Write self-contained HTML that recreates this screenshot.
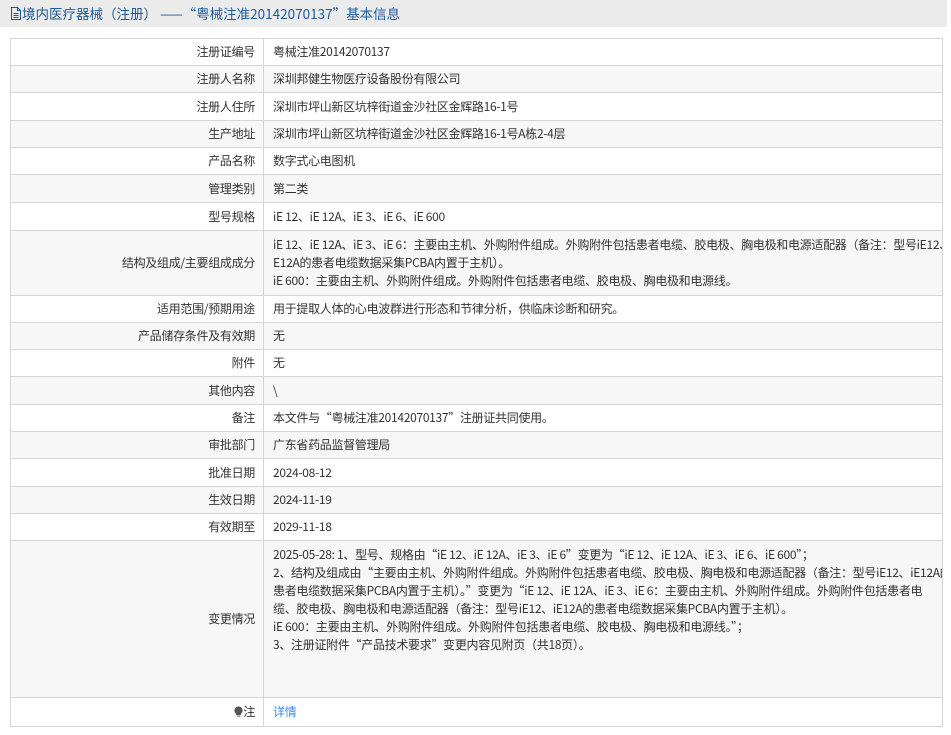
<!DOCTYPE html>
<html><head><meta charset="utf-8"><style>
html,body{margin:0;padding:0;background:#fff;}
body{width:951px;height:735px;overflow:hidden;font-family:"Noto Sans CJK SC","Liberation Sans",sans-serif;font-size:12px;color:#333;position:relative;}
.hd{position:absolute;left:0;top:0;width:947px;height:27px;background:#ebebeb;color:#1f5a9a;font-size:13.5px;line-height:27px;}
.hd span{position:absolute;left:10px;top:0;white-space:nowrap;}
table{position:absolute;left:10px;top:38px;width:933px;border-collapse:collapse;table-layout:fixed;}
td{border:1px solid #d6d6d6;padding:0;vertical-align:middle;overflow:hidden;line-height:18px;letter-spacing:-0.3px;}
td.l{width:244px;text-align:right;padding-right:8px;}
td.v{padding-left:9px;white-space:nowrap;}
tr:nth-child(even) td{background:#f7f7f7;}
a{color:#3a8ee6;text-decoration:none;}
</style></head><body>
<div class="hd"><span><svg width="12" height="13" viewBox="0 0 12 13" style="vertical-align:-1px"><path d="M1.5 .5h6l3 3v9h-9z M7.5 .5v3h3 M3.5 6.5h5 M3.5 8.5h5 M3.5 10.5h5" fill="none" stroke="#1f5a9a"/></svg>境内医疗器械（注册） ——“粤械注准20142070137”基本信息</span></div>
<table>
<tr style="height:27px"><td class="l">注册证编号</td><td class="v">粤械注准20142070137</td></tr>
<tr style="height:27px"><td class="l">注册人名称</td><td class="v">深圳邦健生物医疗设备股份有限公司</td></tr>
<tr style="height:28px"><td class="l">注册人住所</td><td class="v">深圳市坪山新区坑梓街道金沙社区金辉路16-1号</td></tr>
<tr style="height:27px"><td class="l">生产地址</td><td class="v">深圳市坪山新区坑梓街道金沙社区金辉路16-1号A栋2-4层</td></tr>
<tr style="height:27px"><td class="l">产品名称</td><td class="v">数字式心电图机</td></tr>
<tr style="height:28px"><td class="l">管理类别</td><td class="v">第二类</td></tr>
<tr style="height:28px"><td class="l">型号规格</td><td class="v">iE 12、iE 12A、iE 3、iE 6、iE 600</td></tr>
<tr style="height:65px"><td class="l">结构及组成/主要组成成分</td><td class="v">iE 12、iE 12A、iE 3、iE 6：主要由主机、外购附件组成。外购附件包括患者电缆、胶电极、胸电极和电源适配器（备注：型号iE12、i<br>E12A的患者电缆数据采集PCBA内置于主机）。<br>iE 600：主要由主机、外购附件组成。外购附件包括患者电缆、胶电极、胸电极和电源线。</td></tr>
<tr style="height:27px"><td class="l">适用范围/预期用途</td><td class="v">用于提取人体的心电波群进行形态和节律分析，供临床诊断和研究。</td></tr>
<tr style="height:27px"><td class="l">产品储存条件及有效期</td><td class="v">无</td></tr>
<tr style="height:27px"><td class="l">附件</td><td class="v">无</td></tr>
<tr style="height:28px"><td class="l">其他内容</td><td class="v">\</td></tr>
<tr style="height:27px"><td class="l">备注</td><td class="v">本文件与“粤械注准20142070137”注册证共同使用。</td></tr>
<tr style="height:27px"><td class="l">审批部门</td><td class="v">广东省药品监督管理局</td></tr>
<tr style="height:28px"><td class="l">批准日期</td><td class="v">2024-08-12</td></tr>
<tr style="height:27px"><td class="l">生效日期</td><td class="v">2024-11-19</td></tr>
<tr style="height:27px"><td class="l">有效期至</td><td class="v">2029-11-18</td></tr>
<tr style="height:157px"><td class="l">变更情况</td><td class="v" style="vertical-align:top;padding-top:5px;">2025-05-28: 1、型号、规格由“iE 12、iE 12A、iE 3、iE 6”变更为“iE 12、iE 12A、iE 3、iE 6、iE 600”；<br>2、结构及组成由“主要由主机、外购附件组成。外购附件包括患者电缆、胶电极、胸电极和电源适配器（备注：型号iE12、iE12A的<br>患者电缆数据采集PCBA内置于主机）。”变更为“iE 12、iE 12A、iE 3、iE 6：主要由主机、外购附件组成。外购附件包括患者电<br>缆、胶电极、胸电极和电源适配器（备注：型号iE12、iE12A的患者电缆数据采集PCBA内置于主机）。<br>iE 600：主要由主机、外购附件组成。外购附件包括患者电缆、胶电极、胸电极和电源线。”；<br>3、注册证附件“产品技术要求”变更内容见附页（共18页）。</td></tr>
<tr style="height:29px"><td class="l"><svg width="9" height="11" viewBox="0 0 9 11" style="vertical-align:-1px"><path d="M4.5 .5a4 4 0 0 1 2.4 7.2v1.3h-4.8v-1.3A4 4 0 0 1 4.5 .5z" fill="#555"/><rect x="2.6" y="9.4" width="3.8" height="1.4" fill="#888"/></svg>注</td><td class="v"><a>详情</a></td></tr>
</table>
</body></html>
